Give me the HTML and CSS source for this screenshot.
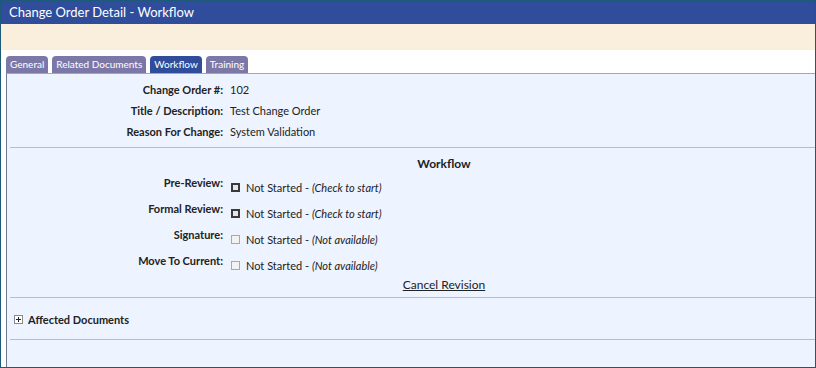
FILE: index.html
```html
<!DOCTYPE html>
<html lang="en">

<head>
    <meta charset="UTF-8">
    <meta name="viewport" content="width=device-width, initial-scale=1.0">
    <title>Change Order Detail - Workflow</title>
    <link rel="stylesheet" href="styles.css">
</head>

<body>
    <div class="frame">
        <div class="title-bar">Change Order Detail - Workflow</div>
        <div class="notice-bar"></div>

        <div class="tabs">
            <a class="tab">General</a>
            <a class="tab">Related Documents</a>
            <a class="tab active">Workflow</a>
            <a class="tab">Training</a>
        </div>

        <div class="panel">
            <div class="info">
                <div class="label">Change Order #:</div>
                <div class="value">102</div>
                <div class="label">Title / Description:</div>
                <div class="value">Test Change Order</div>
                <div class="label">Reason For Change:</div>
                <div class="value">System Validation</div>
            </div>

            <hr>

            <div class="workflow">
                <div class="wf-heading">Workflow</div>

                <div class="wf-row">
                    <div class="label">Pre-Review:</div>
                    <div class="value"><span class="check"></span><span>Not Started - <em>(Check to start)</em></span></div>
                </div>
                <div class="wf-row">
                    <div class="label">Formal Review:</div>
                    <div class="value"><span class="check"></span><span>Not Started - <em>(Check to start)</em></span></div>
                </div>
                <div class="wf-row">
                    <div class="label">Signature:</div>
                    <div class="value"><span class="check disabled"></span><span>Not Started - <em>(Not available)</em></span></div>
                </div>
                <div class="wf-row">
                    <div class="label">Move To Current:</div>
                    <div class="value"><span class="check disabled"></span><span>Not Started - <em>(Not available)</em></span></div>
                </div>

                <div class="wf-cancel"><a href="#">Cancel Revision</a></div>
            </div>

            <hr>

            <div class="section-toggle">
                <svg width="9" height="9" viewBox="0 0 9 9">
                    <rect x="0.5" y="0.5" width="8" height="8" fill="#fff" stroke="#8a8a8a" />
                    <path d="M2 4.5h5M4.5 2v5" stroke="#222" stroke-width="1" />
                </svg>
                <span>Affected Documents</span>
            </div>

            <hr>
        </div>
    </div>
</body>

</html>
```

FILE: styles.css
```css
body {
    margin: 0;
    font-family: Lato, "Open Sans", sans-serif;
    font-size: 11px;
    color: #222;
}

.frame {
    height: 368px;
    box-sizing: border-box;
    border: 1px solid #1d5a7a;
    display: flex;
    flex-direction: column;
    background: #fff;
    overflow: hidden;
}

.title-bar {
    background-color: #2f4d9b;
    color: white;
    font-size: 13px;
    height: 23px;
    line-height: 23px;
    padding-left: 8px;
}

.notice-bar {
    background-color: #faeedc;
    height: 26px;
}

.tabs {
    display: flex;
    gap: 4px;
    padding: 6px 0 0 5px;
    height: 17px;
}

.tab {
    background-color: #7b78a8;
    color: white;
    font-size: 10px;
    line-height: 17px;
    padding: 0 4px;
    border-radius: 4px 4px 0 0;
}

.tab.active {
    background-color: #2f4d9b;
}

.panel {
    flex: 1;
    margin-left: 5px;
    background-color: #edf3ff;
    border-top: 1px solid #9aa8c2;
    border-left: 1px solid #6d7a8c;
}

.info {
    display: grid;
    grid-template-columns: 216px auto;
    column-gap: 7px;
    grid-auto-rows: 21px;
    align-items: center;
    padding-top: 5px;
}

.label {
    font-weight: bold;
    text-align: right;
}

hr {
    border: none;
    border-top: 1px solid #b9bcc3;
    margin: 5px 0 0 3px;
}

.workflow {
    padding-top: 6px;
}

.wf-heading {
    font-weight: bold;
    font-size: 12px;
    text-align: center;
    padding-left: 66px;
    line-height: 20px;
}

.wf-row {
    display: grid;
    grid-template-columns: 216px auto;
    column-gap: 8px;
    height: 26px;
}

.wf-row .label {
    line-height: 16px;
    margin-top: 1px;
}

.wf-row .value {
    display: flex;
    align-items: center;
}

.check {
    width: 9px;
    height: 9px;
    box-sizing: border-box;
    border: 2px solid #3a3a3a;
    background-color: #e6e6e6;
    margin-right: 6px;
}

.check.disabled {
    border: 1px solid #a9a9a9;
    background-color: #f2f2f2;
}

.wf-cancel {
    text-align: center;
    padding-left: 66px;
    line-height: 14px;
}

.wf-cancel a {
    color: #222;
    font-size: 12px;
}

.section-toggle {
    display: flex;
    align-items: center;
    gap: 5px;
    padding: 15px 0 8px 7px;
    font-weight: bold;
}
```
